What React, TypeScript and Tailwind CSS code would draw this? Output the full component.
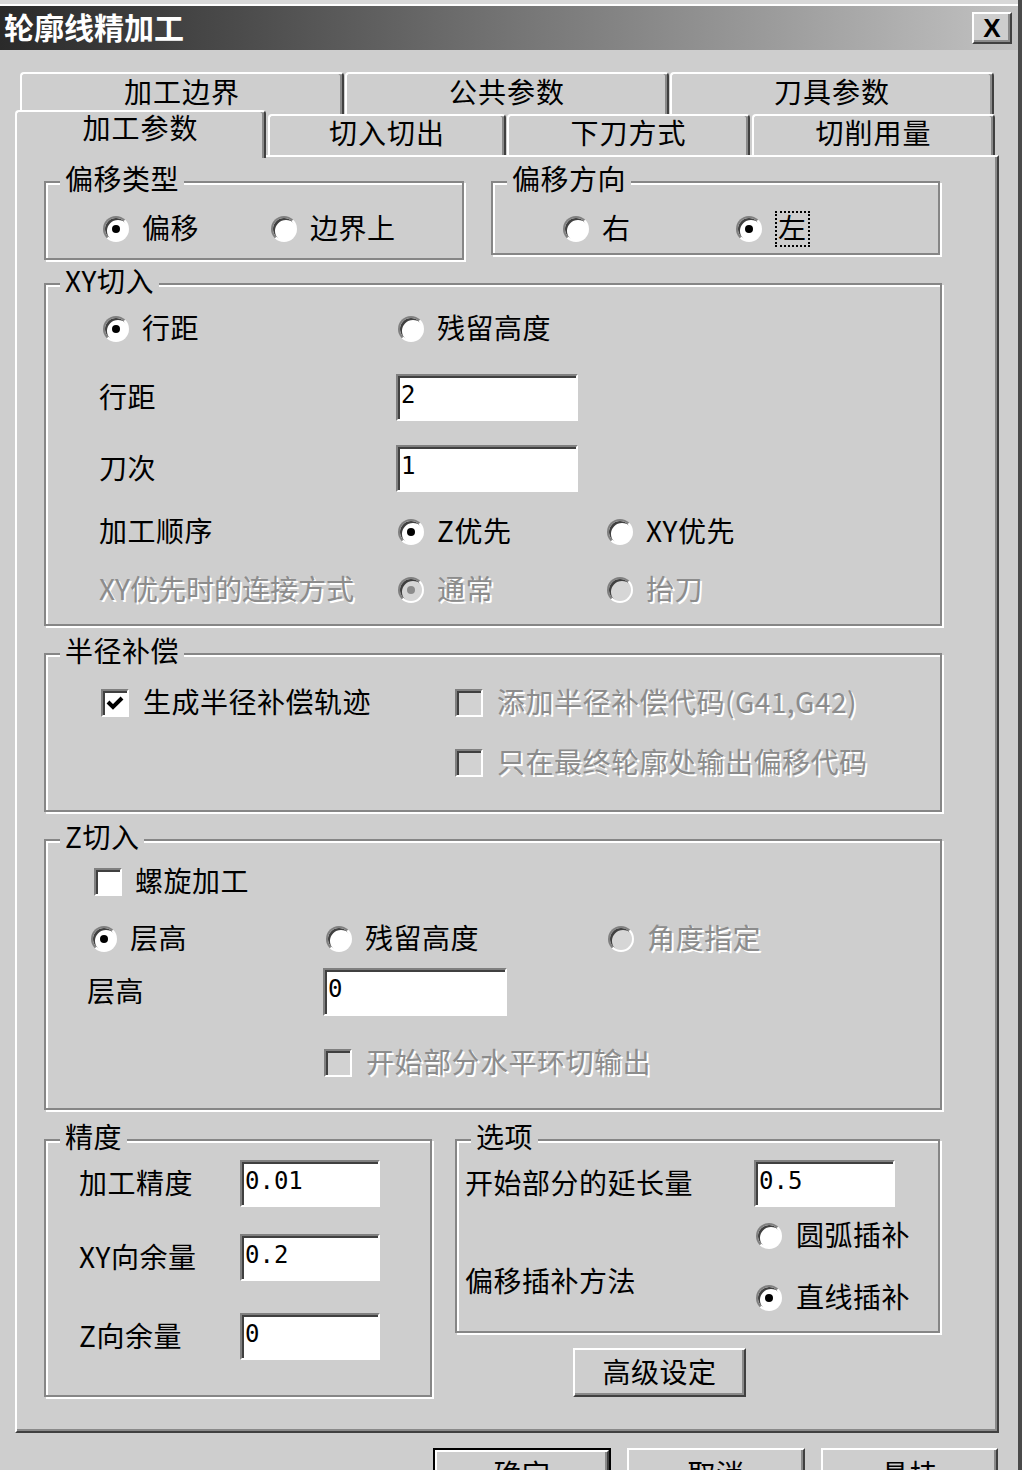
import React from "react";

const CJK = "[font-family:'Noto_Sans_CJK_SC','Noto_Sans',sans-serif]";
const MONO = "[font-family:'DejaVu_Sans_Mono','Liberation_Mono',monospace]";
const DIS = "text-[#8c8c8c] [text-shadow:2px_2px_0_#ffffff]";
const SUNKEN =
  "border-2 border-t-[#808080] border-l-[#808080] border-r-white border-b-white shadow-[inset_2px_2px_0_#404040]";

function Label({ text, disabled, className = "" }: { text: string; disabled?: boolean; className?: string }) {
  return (
    <span
      className={`pb-[4px] text-[28px] leading-[30px] tracking-[0.5px] whitespace-nowrap ${disabled ? DIS : ""} ${className}`}
    >
      {text}
    </span>
  );
}

function Radio({
  label,
  checked,
  disabled,
  focus,
  className = "",
}: {
  label: string;
  checked?: boolean;
  disabled?: boolean;
  focus?: boolean;
  className?: string;
}) {
  return (
    <div className={`flex items-center gap-[13px] shrink-0 ${className}`}>
      <span
        className={`flex h-[26px] w-[26px] shrink-0 items-center justify-center rounded-full ${SUNKEN} ${
          disabled ? "bg-[#d6d6d6]" : "bg-white"
        }`}
      >
        {checked && <span className={`h-[8px] w-[8px] rounded-full ${disabled ? "bg-[#8c8c8c]" : "bg-black"}`} />}
      </span>
      {focus ? (
        <span className="flex h-[36px] items-center border-2 border-dotted border-black px-[1px]">
          <Label text={label} disabled={disabled} />
        </span>
      ) : (
        <Label text={label} disabled={disabled} />
      )}
    </div>
  );
}

function Check({
  label,
  checked,
  disabled,
  className = "",
  gap = "gap-[14px]",
}: {
  label: string;
  checked?: boolean;
  disabled?: boolean;
  className?: string;
  gap?: string;
}) {
  return (
    <div className={`flex items-center shrink-0 ${gap} ${className}`}>
      <span
        className={`flex h-[28px] w-[28px] shrink-0 items-center justify-center ${SUNKEN} ${
          disabled ? "bg-[#d2d2d2]" : "bg-white"
        }`}
      >
        {checked && (
          <svg width="18" height="16" viewBox="0 0 18 16">
            <polyline points="2,7 7,12 16,3" fill="none" stroke="#000" strokeWidth="4" />
          </svg>
        )}
      </span>
      <Label text={label} disabled={disabled} />
    </div>
  );
}

function Field({ value, className = "" }: { value: string; className?: string }) {
  return (
    <div
      className={`shrink-0 bg-white ${SUNKEN} pl-[3px] pt-[5px] text-[24px] leading-[28px] ${MONO} ${className}`}
    >
      {value}
    </div>
  );
}

function Group({
  title,
  className = "",
  children,
}: {
  title: string;
  className?: string;
  children?: React.ReactNode;
}) {
  return (
    <div
      className={`relative shrink-0 border-2 border-[#868686] shadow-[inset_2px_2px_0_#ffffff,2px_2px_0_#ffffff] ${className}`}
    >
      <span className="absolute left-[14px] top-[-20px] bg-[#cecece] px-[5px] text-[28px] leading-[30px] tracking-[0.5px] whitespace-nowrap">
        {title}
      </span>
      {children}
    </div>
  );
}

const RAISED =
  "border-2 border-t-white border-l-white border-r-[#404040] border-b-[#404040] shadow-[inset_-2px_-2px_0_#8a8a8a]";

function Tab({ label, className = "" }: { label: string; className?: string }) {
  return (
    <div
      className={`flex shrink-0 items-center justify-center rounded-t-[4px] border-l-2 border-t-2 border-r-2 border-l-white border-t-white border-r-[#404040] shadow-[inset_-2px_0_0_#8a8a8a] bg-[#cecece] text-[28px] leading-none tracking-[1px] ${className}`}
    >
      {label}
    </div>
  );
}

export default function App() {
  return (
    <div
      className={`h-[1470px] w-[1022px] overflow-hidden border-r-[4px] border-r-[#4a4a4a] bg-[#cecece] text-black ${CJK}`}
    >
      <div className="h-[6px] border-b-[2px] border-b-white bg-[#d8d8d8]" />
      {/* Title bar */}
      <div className="flex h-[44px] items-center justify-between bg-linear-to-r from-[#2a2a2a] via-[#747474] to-[#c2c2c2] pl-[4px] pr-[6px]">
        <span className="pb-[4px] text-[30px] font-bold leading-none text-white">轮廓线精加工</span>
        <div
          className={`flex h-[32px] w-[40px] items-center justify-center bg-[#cecece] ${RAISED} text-[26px] font-bold leading-none [font-family:'Liberation_Sans',sans-serif]`}
        >
          X
        </div>
      </div>

      {/* Tabs row 1 */}
      <div className="ml-[20px] mt-[22px] flex h-[42px] gap-[1px]">
        <Tab label="加工边界" className="h-[42px] w-[324px] pb-[6px]" />
        <Tab label="公共参数" className="h-[42px] w-[324px] pb-[6px]" />
        <Tab label="刀具参数" className="h-[42px] w-[324px] pb-[6px]" />
      </div>
      {/* Tabs row 2 */}
      <div className="flex h-[41px] items-end">
        <Tab label="加工参数" className="relative z-10 -mb-[3px] ml-[15px] h-[48px] w-[251px] pb-[16px]" />
        <Tab label="切入切出" className="ml-[2px] h-[41px] w-[238px] pb-[8px]" />
        <Tab label="下刀方式" className="ml-[1px] h-[41px] w-[243px] pb-[8px]" />
        <Tab label="切削用量" className="ml-[2px] h-[41px] w-[243px] pb-[8px]" />
      </div>

      {/* Panel */}
      <div className="ml-[15px] flex h-[1278px] w-[984px] flex-col border-b-2 border-l-2 border-r-2 border-t-2 border-b-[#404040] border-l-white border-r-[#404040] border-t-white pl-[27px] pt-[24px] shadow-[inset_-2px_-2px_0_#8a8a8a]">
        {/* Row: offset type / direction */}
        <div className="flex items-start">
          <Group title="偏移类型" className="h-[79px] w-[420px]">
            <div className="mt-[31px] flex h-[30px] items-center pl-[57px]">
              <Radio label="偏移" checked className="w-[168px]" />
              <Radio label="边界上" />
            </div>
          </Group>
          <Group title="偏移方向" className="ml-[27px] h-[74px] w-[449px]">
            <div className="mt-[31px] flex h-[30px] items-center pl-[70px]">
              <Radio label="右" className="w-[174px]" />
              <Radio label="左" checked focus className="-ml-[1px]" />
            </div>
          </Group>
        </div>

        {/* XY切入 */}
        <Group title="XY切入" className="mt-[23px] h-[343px] w-[898px]">
          <div className="mt-[29px] flex h-[30px] items-center pl-[57px]">
            <Radio label="行距" checked className="w-[295px]" />
            <Radio label="残留高度" />
          </div>
          <div className="mt-[30px] flex h-[47px] items-center pl-[53px]">
            <Label text="行距" className="w-[297px]" />
            <Field value="2" className="h-[47px] w-[182px]" />
          </div>
          <div className="mt-[24px] flex h-[47px] items-center pl-[53px]">
            <Label text="刀次" className="w-[297px]" />
            <Field value="1" className="h-[47px] w-[182px]" />
          </div>
          <div className="mt-[25px] flex h-[30px] items-center pl-[53px]">
            <Label text="加工顺序" className="w-[299px]" />
            <Radio label="Z优先" checked className="w-[209px]" />
            <Radio label="XY优先" />
          </div>
          <div className="mt-[28px] flex h-[30px] items-center pl-[53px]">
            <Label text="XY优先时的连接方式" disabled className="w-[299px] tracking-[0px]" />
            <Radio label="通常" checked disabled className="w-[209px]" />
            <Radio label="抬刀" disabled />
          </div>
        </Group>

        {/* 半径补偿 */}
        <Group title="半径补偿" className="mt-[27px] h-[159px] w-[898px]">
          <div className="mt-[33px] flex h-[30px] items-center pl-[55px]">
            <Check label="生成半径补偿轨迹" checked className="w-[354px]" />
            <Check label="添加半径补偿代码(G41,G42)" disabled />
          </div>
          <div className="mt-[30px] flex h-[30px] items-center pl-[409px]">
            <Check label="只在最终轮廓处输出偏移代码" disabled />
          </div>
        </Group>

        {/* Z切入 */}
        <Group title="Z切入" className="mt-[27px] h-[271px] w-[898px]">
          <div className="mt-[26px] flex h-[30px] items-center pl-[48px]">
            <Check label="螺旋加工" gap="gap-[13px]" />
          </div>
          <div className="mt-[27px] flex h-[30px] items-center pl-[45px]">
            <Radio label="层高" checked className="w-[235px]" />
            <Radio label="残留高度" className="w-[282px]" />
            <Radio label="角度指定" disabled />
          </div>
          <div className="mt-[14px] flex h-[48px] items-center pl-[41px]">
            <Label text="层高" className="w-[236px]" />
            <Field value="0" className="h-[48px] w-[184px]" />
          </div>
          <div className="mt-[32px] flex h-[30px] items-center pl-[278px]">
            <Check label="开始部分水平环切输出" disabled />
          </div>
        </Group>

        {/* Bottom groups */}
        <div className="mt-[29px] flex items-start">
          <Group title="精度" className="h-[258px] w-[388px]">
            <div className="mt-[19px] flex h-[47px] items-center pl-[33px]">
              <Label text="加工精度" className="w-[161px]" />
              <Field value="0.01" className="h-[47px] w-[140px]" />
            </div>
            <div className="mt-[27px] flex h-[47px] items-center pl-[33px]">
              <Label text="XY向余量" className="w-[161px]" />
              <Field value="0.2" className="h-[47px] w-[140px]" />
            </div>
            <div className="mt-[32px] flex h-[47px] items-center pl-[33px]">
              <Label text="Z向余量" className="w-[161px]" />
              <Field value="0" className="h-[47px] w-[140px]" />
            </div>
          </Group>
          <div className="ml-[23px] flex flex-col">
            <Group title="选项" className="h-[194px] w-[485px]">
              <div className="mt-[19px] flex h-[47px] items-center pl-[8px]">
                <Label text="开始部分的延长量" className="w-[289px]" />
                <Field value="0.5" className="h-[47px] w-[141px]" />
              </div>
              <div className="flex pl-[8px]">
                <Label text="偏移插补方法" className="mt-[58px] w-[291px]" />
                <div className="flex flex-col">
                  <Radio label="圆弧插补" className="mt-[14px] h-[30px] gap-[14px]" />
                  <Radio label="直线插补" checked className="mt-[32px] h-[30px] gap-[14px]" />
                </div>
              </div>
            </Group>
            <div
              className={`ml-[118px] mt-[15px] flex h-[49px] w-[173px] items-center justify-center bg-[#cecece] ${RAISED} pb-[4px] text-[28px] leading-none tracking-[0.5px]`}
            >
              高级设定
            </div>
          </div>
        </div>
      </div>

      {/* Dialog buttons */}
      <div className="ml-[433px] mt-[15px] flex gap-[16px]">
        <div className="h-[50px] w-[178px] border-2 border-black">
          <div
            className={`flex h-full w-full items-center justify-center bg-[#cecece] ${RAISED} text-[28px] leading-none tracking-[0.5px]`}
          >
            确定
          </div>
        </div>
        <div
          className={`flex h-[50px] w-[178px] items-center justify-center bg-[#cecece] ${RAISED} text-[28px] leading-none tracking-[0.5px]`}
        >
          取消
        </div>
        <div
          className={`flex h-[50px] w-[177px] items-center justify-center bg-[#cecece] ${RAISED} text-[28px] leading-none tracking-[0.5px]`}
        >
          悬挂
        </div>
      </div>
    </div>
  );
}
